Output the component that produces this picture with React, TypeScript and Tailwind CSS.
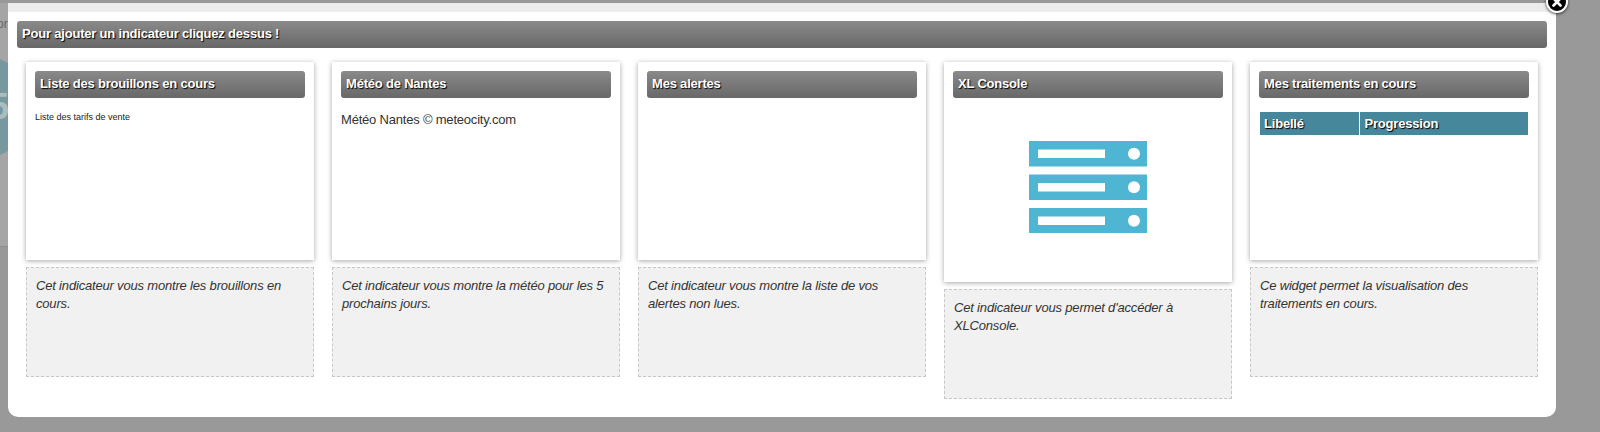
import React from "react";

const titleText = "font-bold text-[13px] tracking-[-0.2px] text-white [text-shadow:1px_1px_1px_#000]";

function TitleBar({ children }: { children: React.ReactNode }) {
  return (
    <div className={`h-[27px] rounded-[3px] bg-gradient-to-b from-[#8a8a8a] to-[#686868] pl-[5px] pt-[4px] leading-[17px] ${titleText}`}>
      {children}
    </div>
  );
}

function ServerIcon() {
  return (
    <svg width="118" height="92" viewBox="0 0 118 92" className="block">
      {[0, 33.5, 67].map((y) => (
        <g key={y}>
          <rect x="0" y={y} width="118" height="25.5" fill="#4eb5d3" />
          <rect x="9" y={y + 8.5} width="67" height="8.5" fill="#fff" />
          <circle cx="105" cy={y + 12.75} r="6" fill="#fff" />
        </g>
      ))}
    </svg>
  );
}

type Indicator = {
  title: string;
  description: React.ReactNode;
  body?: React.ReactNode;
  tall?: boolean;
};

const indicators: Indicator[] = [
  {
    title: "Liste des brouillons en cours",
    description: "Cet indicateur vous montre les brouillons en cours.",
    body: <p className="pt-[13px] text-[9px] leading-[12px] text-[#222]">Liste des tarifs de vente</p>,
  },
  {
    title: "Météo de Nantes",
    description: "Cet indicateur vous montre la météo pour les 5 prochains jours.",
    body: <p className="pt-[13px] text-[13px] leading-[18px] tracking-[-0.2px] text-[#333]">Météo Nantes © meteocity.com</p>,
  },
  {
    title: "Mes alertes",
    description: "Cet indicateur vous montre la liste de vos alertes non lues.",
  },
  {
    title: "XL Console",
    description: "Cet indicateur vous permet d'accéder à XLConsole.",
    tall: true,
    body: (
      <div className="flex justify-center pt-[43px]">
        <ServerIcon />
      </div>
    ),
  },
  {
    title: "Mes traitements en cours",
    description: "Ce widget permet la visualisation des traitements en cours.",
    body: (
      <div className="px-[1px] pt-[14px]">
        <table className="w-full border-collapse">
          <thead>
            <tr className={`h-[23px] bg-[#46879c] text-left ${titleText}`}>
              <th className="w-[99px] border-r border-white pl-[4px]">Libellé</th>
              <th className="pl-[5px]">Progression</th>
            </tr>
          </thead>
        </table>
      </div>
    ),
  },
];

function IndicatorColumn({ item }: { item: Indicator }) {
  return (
    <div className="w-[288px] shrink-0">
      <div className={`bg-white p-[9px] shadow-[0_1px_5px_rgba(0,0,0,0.35)] ${item.tall ? "h-[220px]" : "h-[198px]"}`}>
        <TitleBar>{item.title}</TitleBar>
        {item.body}
      </div>
      <div className="mt-[7px] h-[110px] border border-dashed border-[#c8c8c8] bg-[#f1f1f1] px-[9px] pt-[9px] text-[13px] italic leading-[18px] tracking-[-0.18px] text-[#333]">
        {item.description}
      </div>
    </div>
  );
}

export default function App() {
  return (
    <div className="relative h-[432px] w-[1600px] overflow-hidden bg-[#999999] font-['Liberation_Sans',Arial,sans-serif]">
      {/* page behind the overlay, only the left edge shows */}
      <div className="absolute left-0 top-[3px] h-[244px] w-[8px] overflow-hidden border-b border-[#8f8f8f] bg-[#a5a5a5]">
        <span className="absolute left-[-3px] top-[12px] text-[12px] text-[#666]">or</span>
        <div className="absolute left-[-72px] top-[52px] flex h-[104px] w-[104px] items-center justify-end rounded-full bg-[#78989f] pr-[23px] text-[36px] font-bold text-[#a9bcc0]">
          5
        </div>
      </div>

      <div className="relative ml-[8px] mt-[3px] h-[414px] w-[1548px] rounded-b-[10px] bg-white">
        <div className="h-[9px] bg-[#ececec]" />
        <div className="px-[9px] pt-[9px]">
          <TitleBar>Pour ajouter un indicateur cliquez dessus !</TitleBar>
        </div>
        <div className="mt-[14px] flex gap-[18px] px-[18px]">
          {indicators.map((item) => (
            <IndicatorColumn key={item.title} item={item} />
          ))}
        </div>
        <button className="absolute left-[1538px] top-[-12px] flex h-[22px] w-[22px] items-center justify-center rounded-full border-2 border-white bg-black text-white shadow-[0_1px_3px_rgba(0,0,0,0.7)]">
          <svg width="10" height="10" viewBox="0 0 10 10">
            <path d="M1.5 1.5l7 7M8.5 1.5l-7 7" stroke="#fff" strokeWidth="2.6" strokeLinecap="round" />
          </svg>
        </button>
      </div>
    </div>
  );
}
